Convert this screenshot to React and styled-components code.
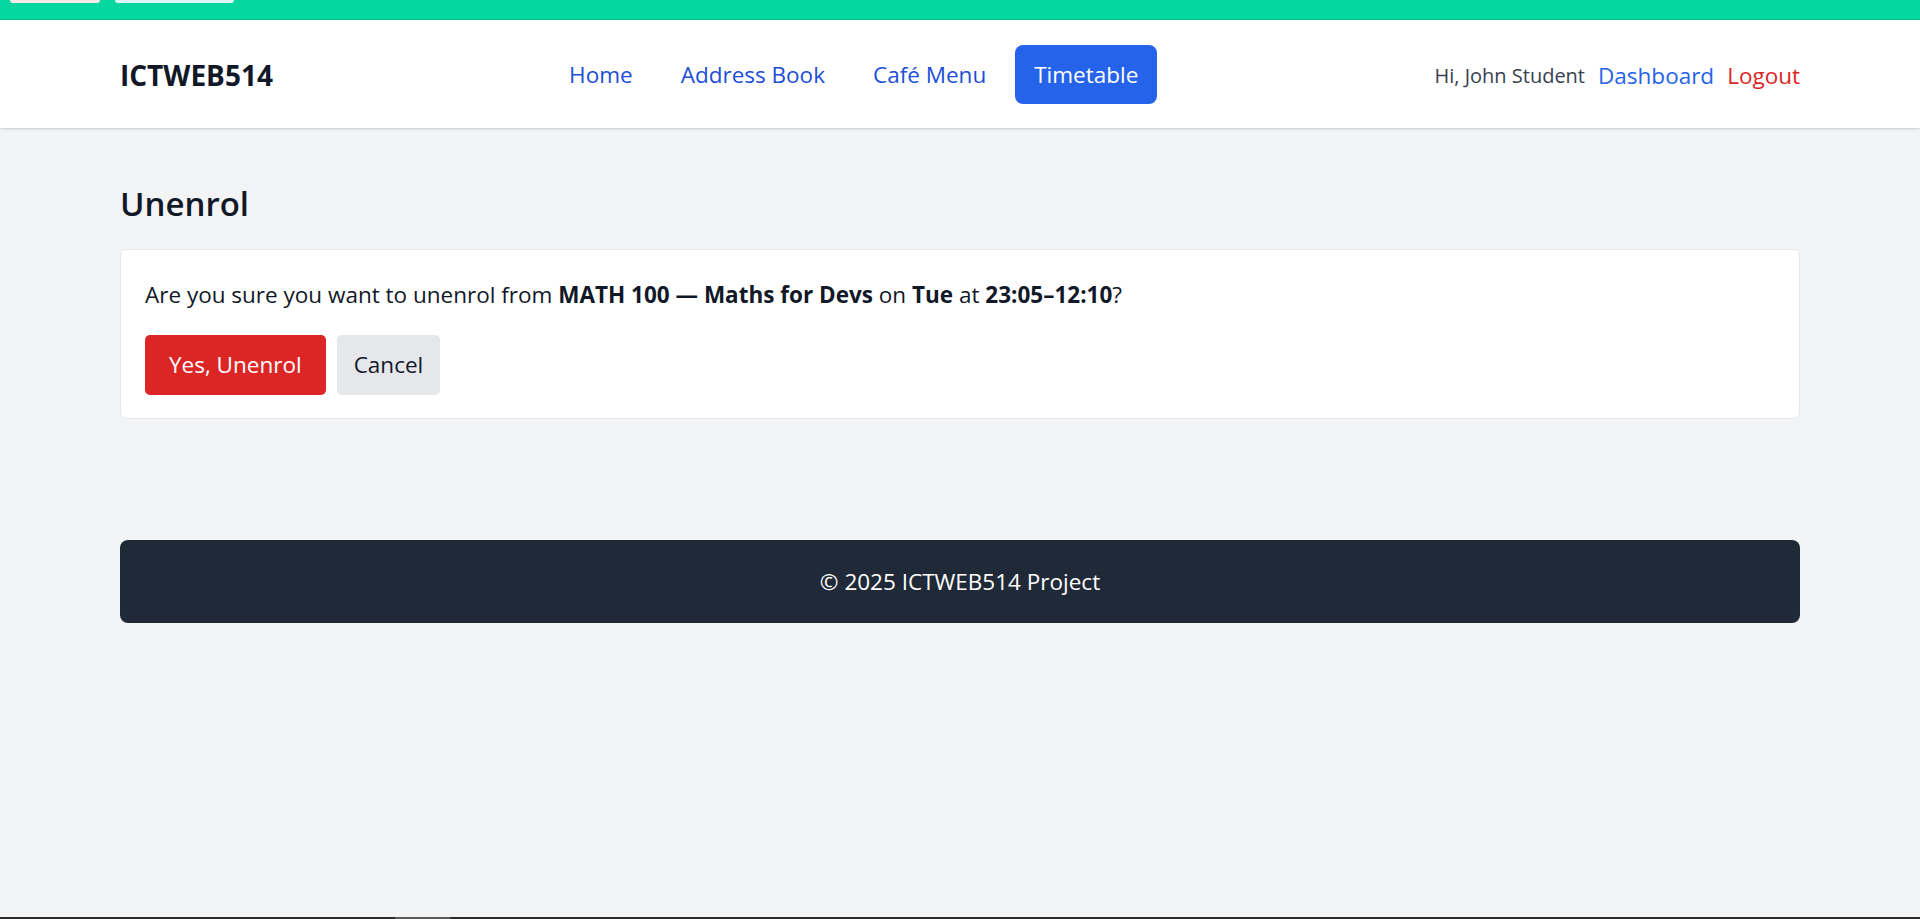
import React from 'react';
import styled, { createGlobalStyle } from 'styled-components';

const GlobalStyle = createGlobalStyle`
  html, body {
    margin: 0;
    padding: 0;
    background: #f3f4f6;
  }
  body {
    font-family: 'Open Sans', 'Noto Sans', sans-serif;
    color: #111827;
  }
  * {
    box-sizing: border-box;
  }
`;

const App = () => {
  return (
    <Page>
      <GlobalStyle />
      <TopStrip>
        <Tab $bg="#fce8e6" $left={10} $width={90} />
        <Tab $bg="#e0f7fa" $left={15} $width={119} />
      </TopStrip>

      <Header>
        <HeaderInner>
          <Logo>ICTWEB514</Logo>
          <Nav>
            <NavLink href="#">Home</NavLink>
            <NavLink href="#">Address Book</NavLink>
            <NavLink href="#">Café Menu</NavLink>
            <NavLink href="#" $active>Timetable</NavLink>
          </Nav>
          <UserArea>
            <Greeting>Hi, John Student</Greeting>
            <UserLink href="#">Dashboard</UserLink>
            <UserLink href="#" $danger>Logout</UserLink>
          </UserArea>
        </HeaderInner>
      </Header>

      <Main>
        <Title>Unenrol</Title>
        <Card>
          <Message>
            Are you sure you want to unenrol from <strong>MATH 100 — Maths for Devs</strong> on{' '}
            <strong>Tue</strong> at <strong>23:05–12:10</strong>?
          </Message>
          <Actions>
            <Button $variant="danger" $padX={24}>Yes, Unenrol</Button>
            <Button $padX={17}>Cancel</Button>
          </Actions>
        </Card>
      </Main>

      <Footer>© 2025 ICTWEB514 Project</Footer>

      <BottomBar>
        <BottomThumb />
      </BottomBar>
    </Page>
  );
};

// Styled Components
const Page = styled.div`
  display: flex;
  flex-direction: column;
  min-height: 100vh;
  background: #f3f4f6;
`;

const TopStrip = styled.div`
  display: flex;
  align-items: flex-start;
  height: 20px;
  background: #06d6a0;
  border-bottom: 1px solid #05c896;
`;

const Tab = styled.span`
  display: block;
  width: ${(p) => p.$width}px;
  height: 3px;
  margin-left: ${(p) => p.$left}px;
  background: ${(p) => p.$bg};
  border-radius: 0 0 5px 5px;
`;

const Header = styled.header`
  background: #ffffff;
  box-shadow: 0 1px 3px rgba(0, 0, 0, 0.12), 0 1px 2px rgba(0, 0, 0, 0.06);
  position: relative;
  z-index: 1;
`;

const HeaderInner = styled.div`
  max-width: 1680px;
  margin: 0 auto;
  height: 108px;
  display: flex;
  align-items: center;
  justify-content: space-between;
`;

const Logo = styled.div`
  font-size: 28px;
  font-weight: 700;
  color: #111827;
  padding-top: 2px;
`;

const Nav = styled.nav`
  display: flex;
  align-items: center;
  gap: 10px;
`;

const NavLink = styled.a`
  display: block;
  padding: 12px 19px;
  font-size: 22.5px;
  line-height: 35px;
  text-decoration: none;
  border-radius: 8px;
  color: ${(p) => (p.$active ? '#ffffff' : '#1d4ed8')};
  background: ${(p) => (p.$active ? '#2563eb' : 'transparent')};
`;

const UserArea = styled.div`
  display: flex;
  align-items: center;
  gap: 13px;
  padding-top: 2px;
`;

const Greeting = styled.span`
  font-size: 20px;
  color: #374151;
`;

const UserLink = styled.a`
  font-size: 22.5px;
  text-decoration: none;
  color: ${(p) => (p.$danger ? '#dc2626' : '#2563eb')};
`;

const Main = styled.main`
  width: 100%;
  max-width: 1680px;
  margin: 0 auto;
  padding: 54px 0 0;
`;

const Title = styled.h1`
  margin: 0 0 23px;
  font-size: 33px;
  line-height: 44px;
  font-weight: 600;
  color: #111827;
`;

const Card = styled.div`
  background: #ffffff;
  border: 1px solid #e5e7eb;
  border-radius: 6px;
  padding: 27px 24px 23px;
`;

const Message = styled.p`
  margin: 0 0 23px;
  font-size: 22.5px;
  line-height: 35px;
  color: #111827;

  strong {
    font-weight: 700;
  }
`;

const Actions = styled.div`
  display: flex;
  gap: 11px;
`;

const Button = styled.button`
  font-family: inherit;
  font-size: 22.5px;
  line-height: 35px;
  padding: 12px ${(p) => p.$padX}px 13px;
  border: none;
  border-radius: 5px;
  cursor: pointer;
  color: ${(p) => (p.$variant === 'danger' ? '#ffffff' : '#111827')};
  background: ${(p) => (p.$variant === 'danger' ? '#dc2626' : '#e5e7eb')};
`;

const Footer = styled.footer`
  width: 100%;
  max-width: 1680px;
  margin: 121px auto 0;
  height: 83px;
  display: flex;
  align-items: center;
  justify-content: center;
  background: #1f2937;
  border-radius: 8px;
  color: #ffffff;
  font-size: 22.5px;
`;

const BottomBar = styled.div`
  margin-top: auto;
  height: 2px;
  background: #2c2c2c;
`;

const BottomThumb = styled.div`
  width: 55px;
  height: 2px;
  margin-left: 395px;
  background: #5c5c5c;
`;

export default App;
